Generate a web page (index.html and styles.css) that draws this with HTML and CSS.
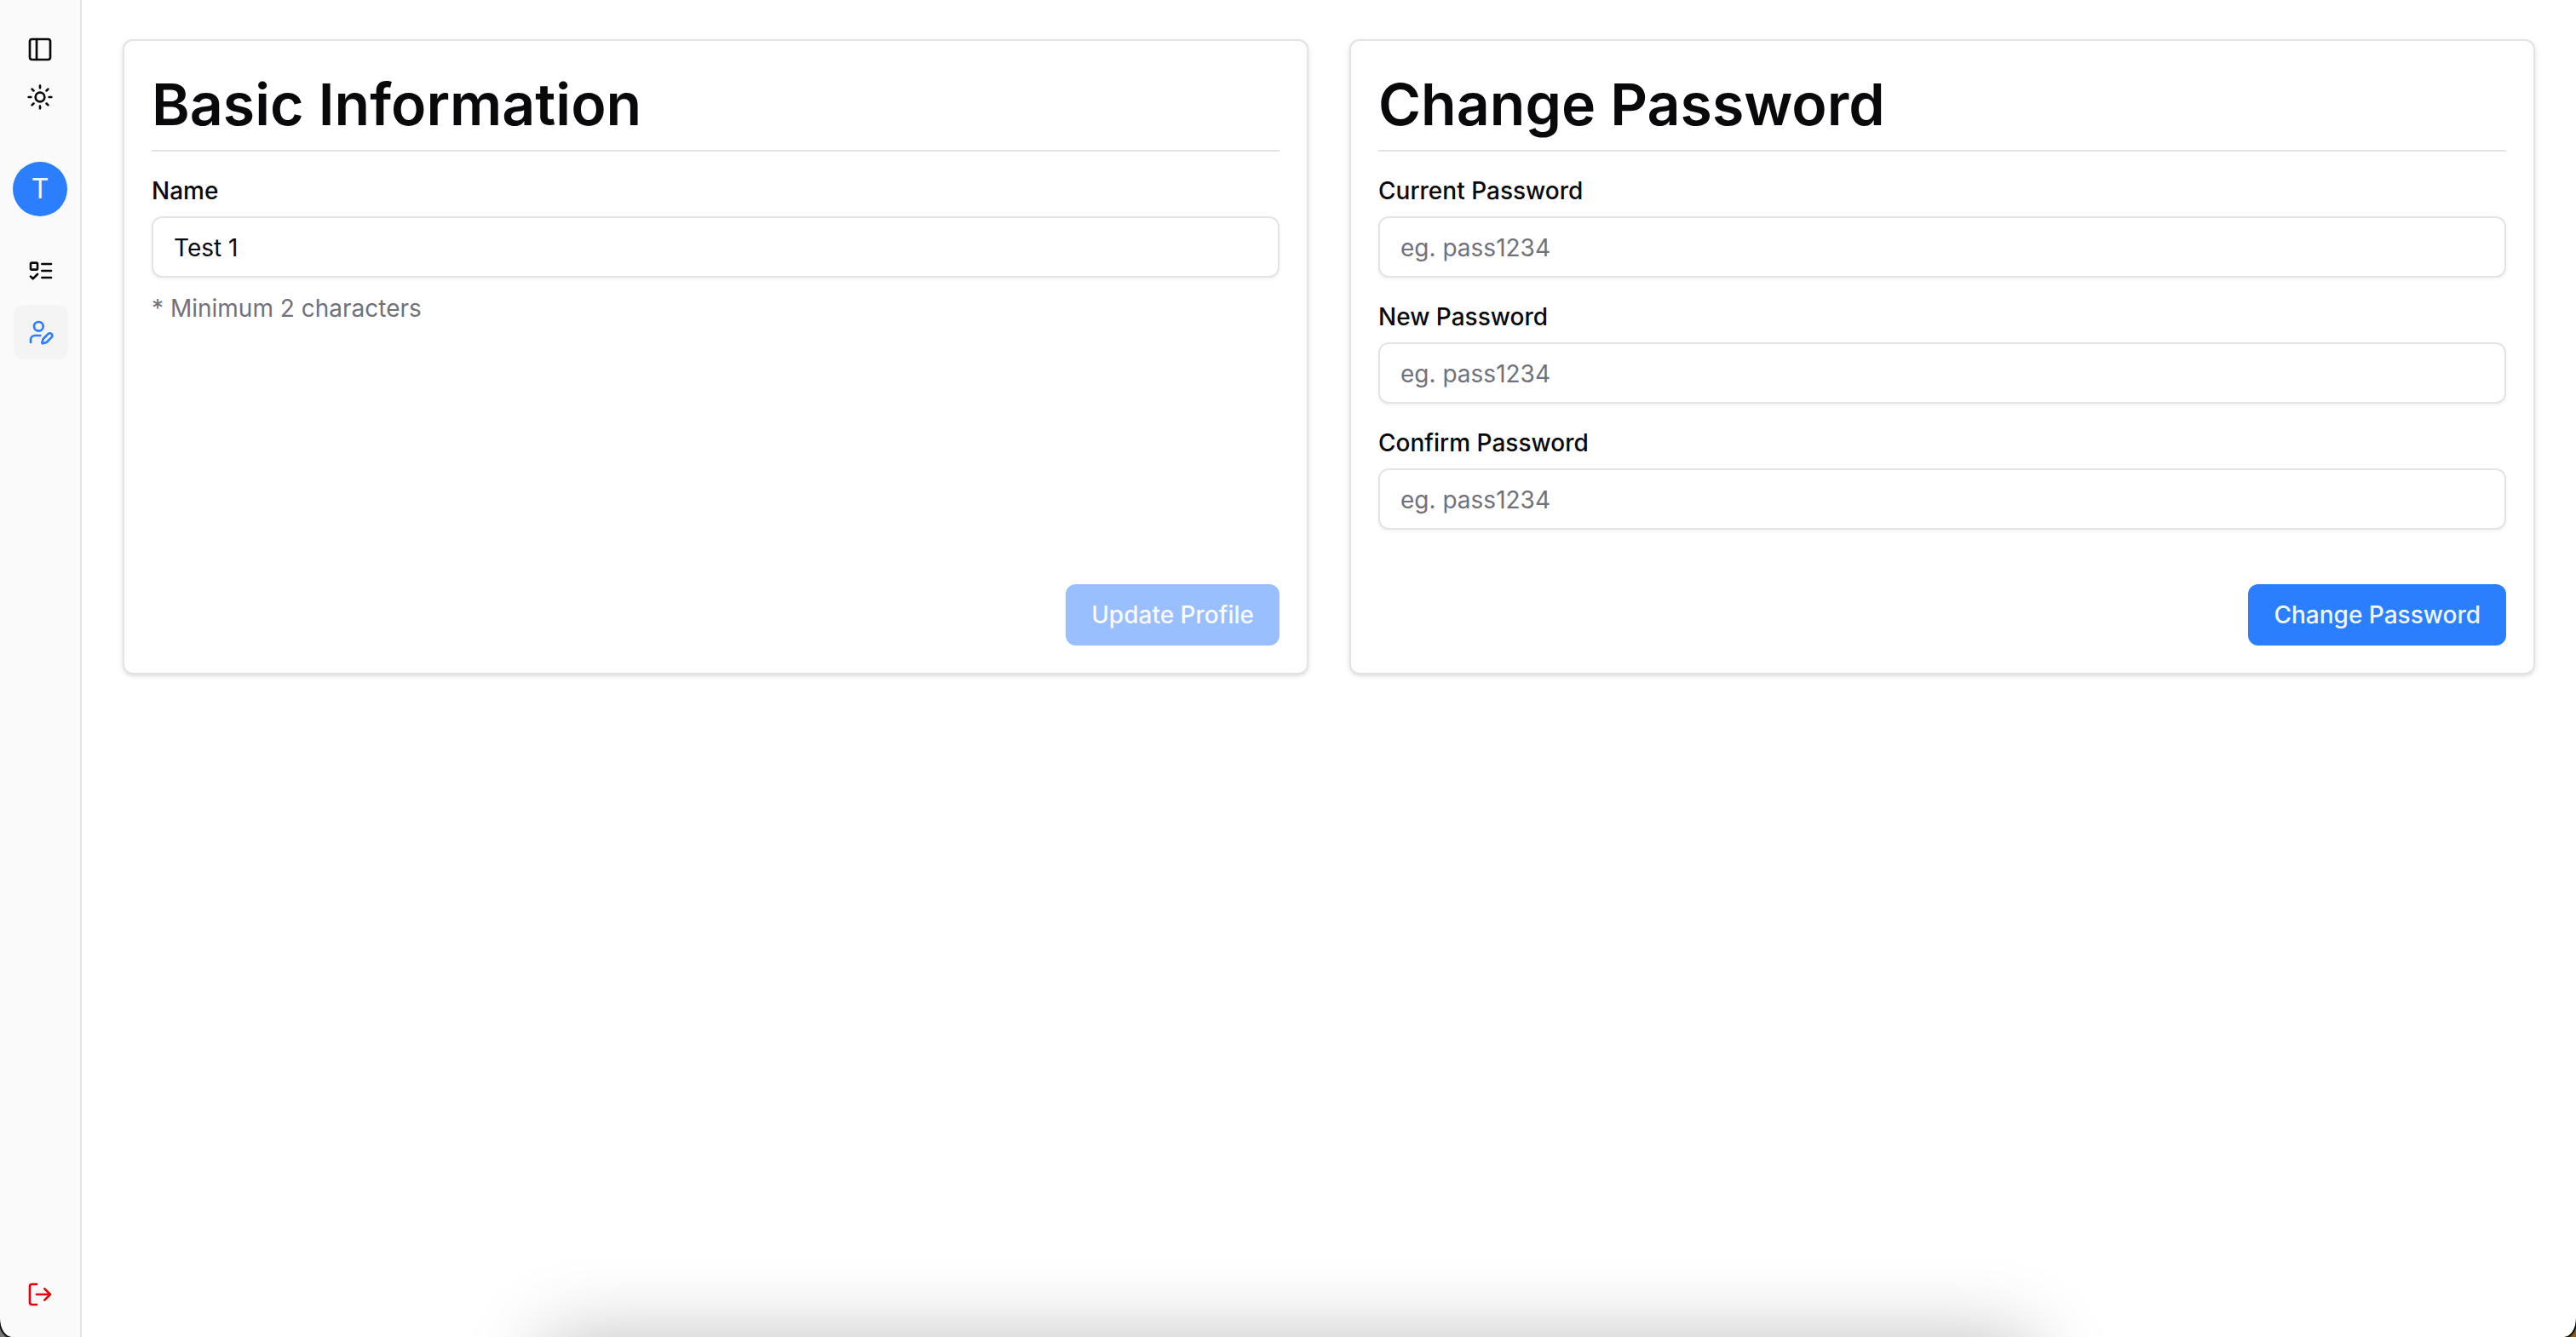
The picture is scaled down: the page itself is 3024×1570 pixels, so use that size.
FILE: index.html
```html
<!DOCTYPE html>
<html lang="en">
<head>
<meta charset="utf-8">
<title>Profile</title>
<link rel="stylesheet" href="styles.css">
</head>
<body>
<div class="app">
  <aside class="sidebar">
    <div class="tools">
      <button class="icon-button" type="button" aria-label="Toggle sidebar">
        <svg class="icon" viewBox="0 0 24 24"><rect width="18" height="18" x="3" y="3" rx="2"/><path d="M9 3v18"/></svg>
      </button>
      <button class="icon-button" type="button" aria-label="Toggle theme">
        <svg class="icon" viewBox="0 0 24 24"><circle cx="12" cy="12" r="4"/><path d="M12 2v2M12 20v2M4.93 4.93l1.41 1.41M17.66 17.66l1.41 1.41M2 12h2M20 12h2M6.34 17.66l-1.41 1.41M19.07 4.93l-1.41 1.41"/></svg>
      </button>
    </div>
    <div class="avatar">T</div>
    <nav class="menu">
      <a class="menu-link" href="#tasks" aria-label="Tasks">
        <svg class="icon" viewBox="0 0 24 24"><rect x="3" y="5" width="6" height="6" rx="1"/><path d="m3 17 2 2 4-4M13 6h8M13 12h8M13 18h8"/></svg>
      </a>
      <a class="menu-link active" href="#profile" aria-label="Profile" aria-current="page">
        <svg class="icon" viewBox="0 0 24 24"><path d="M11.5 15H7a4 4 0 0 0-4 4v2"/><path d="M21.378 16.626a1 1 0 0 0-3.004-3.004l-4.01 4.012a2 2 0 0 0-.506.854l-.837 2.87a.5.5 0 0 0 .62.62l2.87-.837a2 2 0 0 0 .854-.506z"/><circle cx="10" cy="7" r="4"/></svg>
      </a>
    </nav>
    <button class="icon-button logout" type="button" aria-label="Log out">
      <svg class="icon" viewBox="0 0 24 24"><path d="m16 17 5-5-5-5M21 12H9M9 21H5a2 2 0 0 1-2-2V5a2 2 0 0 1 2-2h4"/></svg>
    </button>
  </aside>
  <main class="content">
    <form class="card">
      <h2 class="card-title">Basic Information</h2>
      <div class="field">
        <label class="label" for="name">Name</label>
        <input class="input" id="name" type="text" value="Test 1">
        <p class="hint">* Minimum 2 characters</p>
      </div>
      <button class="button" type="submit" disabled>Update Profile</button>
    </form>
    <form class="card">
      <h2 class="card-title">Change Password</h2>
      <div class="field">
        <label class="label" for="current">Current Password</label>
        <input class="input" id="current" type="password" placeholder="eg. pass1234">
      </div>
      <div class="field">
        <label class="label" for="new">New Password</label>
        <input class="input" id="new" type="password" placeholder="eg. pass1234">
      </div>
      <div class="field">
        <label class="label" for="confirm">Confirm Password</label>
        <input class="input" id="confirm" type="password" placeholder="eg. pass1234">
      </div>
      <button class="button" type="submit">Change Password</button>
    </form>
  </main>
  <div class="dock-shadow"></div>
</div>
</body>
</html>
```
FILE: styles.css
```css
* { box-sizing: border-box; margin: 0; }

html { background: linear-gradient(90deg, #777 50%, #87591c 50%); }

body {
  font-family: Inter, "Liberation Sans", sans-serif;
  font-size: 28px;
  line-height: 40px;
  color: #09090b;
}

.app {
  position: relative;
  display: flex;
  min-height: 100vh;
  overflow: hidden;
  background: #fff;
  border-radius: 0 0 14px 14px / 0 0 22px 22px;
  outline: 2px solid #111;
}

.sidebar {
  display: flex;
  flex-direction: column;
  flex: none;
  align-items: center;
  width: 96px;
  padding: 30px 0 22px;
  background: #fafafa;
  border-right: 2px solid #e4e4e4;
}

.tools { display: flex; flex-direction: column; }

.icon-button {
  display: grid;
  place-items: center;
  width: 56px;
  height: 56px;
  padding: 0;
  border: 0;
  background: none;
  color: inherit;
}

.icon {
  width: 32px;
  height: 32px;
  fill: none;
  stroke: currentColor;
  stroke-width: 2;
  stroke-linecap: round;
  stroke-linejoin: round;
}

.avatar {
  display: grid;
  place-items: center;
  width: 64px;
  height: 64px;
  margin-top: 48px;
  border-radius: 50%;
  background: #2b7fff;
  color: #eff6ff;
  font-size: 32px;
}

.menu {
  display: flex;
  flex-direction: column;
  align-self: flex-start;
  gap: 8px;
  padding: 32px 0 0 16px;
}

.menu-link {
  display: grid;
  place-items: center;
  width: 64px;
  height: 64px;
  border-radius: 12px;
  color: inherit;
}

.menu-link.active { background: #f4f4f5; color: #2b7fff; }

.logout { margin-top: auto; color: #e7000b; }

.content {
  display: grid;
  flex: 1;
  grid-template-columns: 1fr 1fr;
  align-content: start;
  gap: 48px;
  padding: 46px 48px;
}

.card {
  display: flex;
  flex-direction: column;
  gap: 32px;
  padding: 32px;
  border: 2px solid #e4e4e4;
  border-radius: 12px;
  background: #fff;
  box-shadow: 0 2px 6px rgba(0, 0, 0, .1), 0 2px 4px -2px rgba(0, 0, 0, .1);
}

.card-title {
  padding-bottom: 12px;
  border-bottom: 2px solid #e4e4e4;
  font-size: 68px;
  font-weight: 600;
  line-height: 84px;
}

.field { display: flex; flex-direction: column; gap: 16px; }

/* keeps the action clear of the last field */
.field:nth-last-child(2) { margin-bottom: 32px; }

.label { font-weight: 500; line-height: 28px; }

.input {
  width: 100%;
  height: 72px;
  padding: 2px 24px 0;
  border: 2px solid #e4e4e4;
  border-radius: 12px;
  background: #fff;
  box-shadow: 0 2px 4px rgba(0, 0, 0, .05);
  color: inherit;
  font: inherit;
}

.input::placeholder { color: #71717b; opacity: 1; }

.hint { color: #71717b; }

.button {
  align-self: flex-end;
  height: 72px;
  margin-top: auto;
  padding: 0 30px;
  border: 0;
  border-radius: 12px;
  background: #2b7fff;
  color: #eff6ff;
  font: inherit;
  font-weight: 500;
}

.button:disabled { background: #9abfff; color: #f7fbff; }

.dock-shadow {
  position: absolute;
  top: 100%;
  left: 21%;
  right: 21%;
  height: 120px;
  border-radius: 40px;
  box-shadow: 0 0 90px rgba(0, 0, 0, .25);
  pointer-events: none;
}
```
